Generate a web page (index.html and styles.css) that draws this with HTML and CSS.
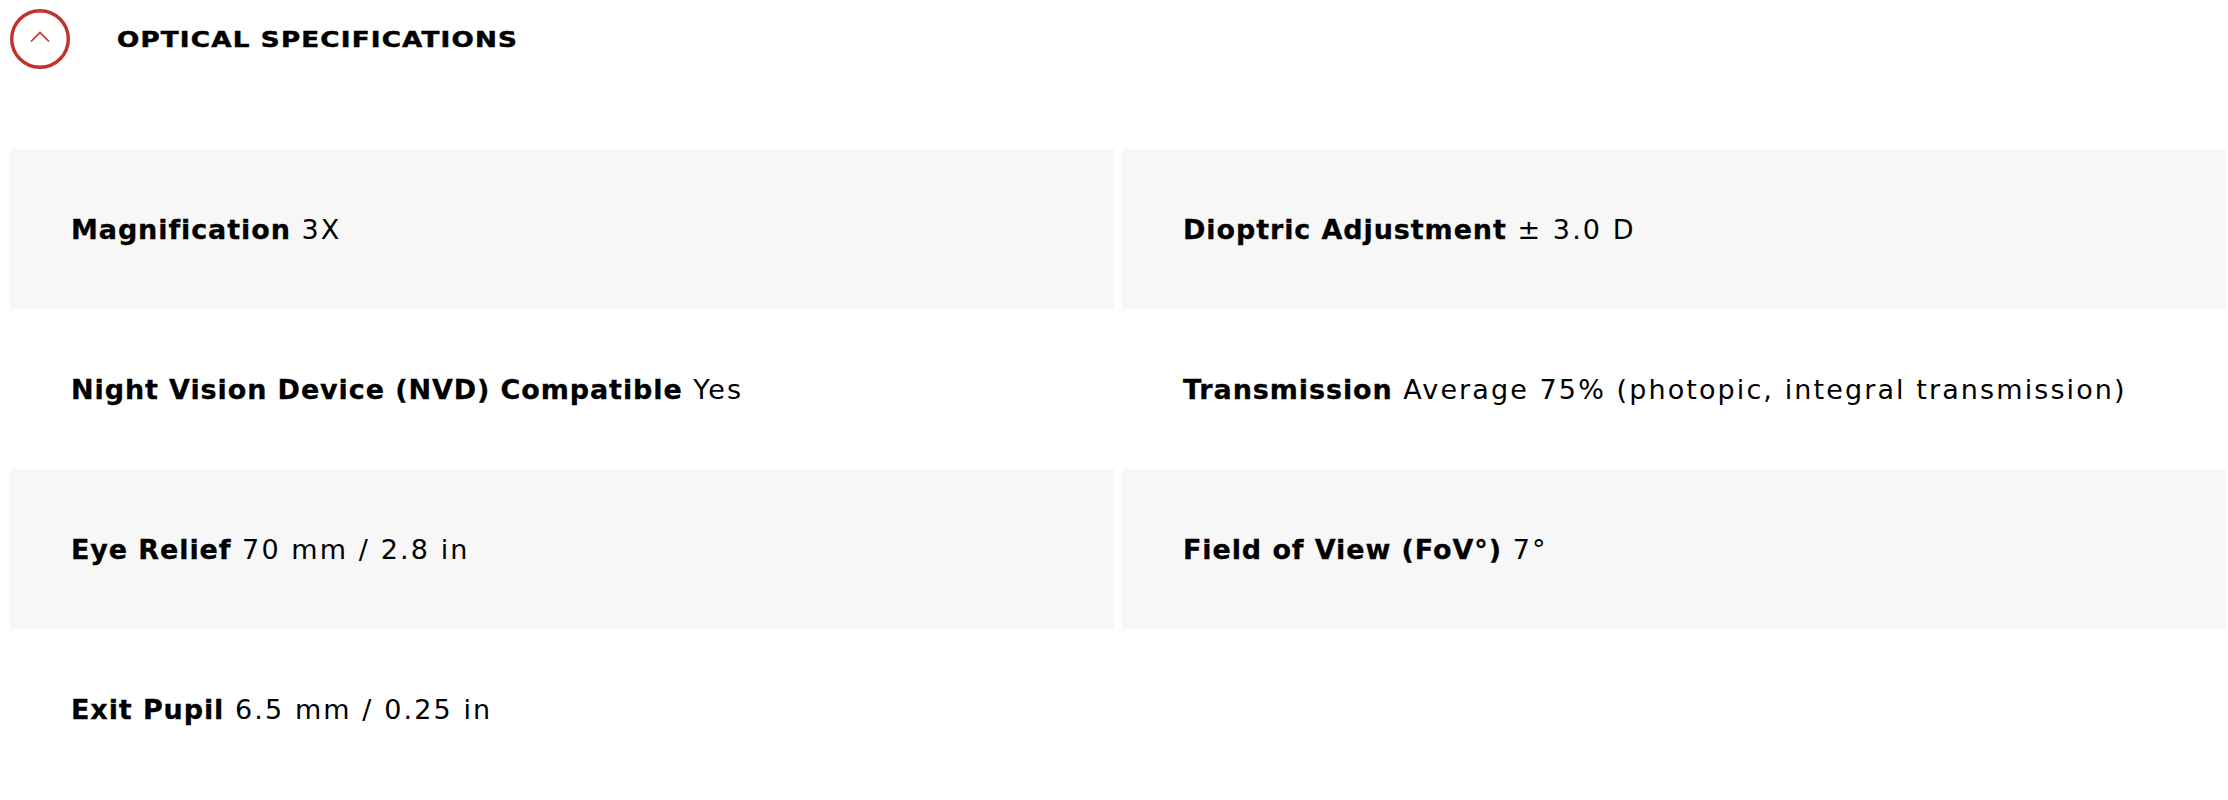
FILE: index.html
```html
<!DOCTYPE html>
<html lang="en">
<head>
<meta charset="utf-8">
<title>Optical Specifications</title>
<link rel="stylesheet" href="styles.css">
</head>
<body>
<section class="specs">
  <header class="specs-header">
    <button class="toggle" aria-label="Collapse">
      <svg viewBox="0 0 60 60" width="60" height="60">
        <circle cx="30" cy="30" r="28.3" fill="none" stroke="#c3312b" stroke-width="3.4"/>
        <path d="M21 32.5 L30 23.5 L39 32.5" fill="none" stroke="#c3312b" stroke-width="1.7"/>
      </svg>
    </button>
    <h2 class="specs-title">OPTICAL SPECIFICATIONS</h2>
  </header>
  <div class="specs-grid">
    <div class="cell shaded"><p><b>Magnification</b> 3X</p></div>
    <div class="cell shaded"><p><b>Dioptric Adjustment</b> ± 3.0 D</p></div>
    <div class="cell"><p><b>Night Vision Device (NVD) Compatible</b> Yes</p></div>
    <div class="cell"><p><b>Transmission</b> Average 75% (photopic, integral transmission)</p></div>
    <div class="cell shaded"><p><b>Eye Relief</b> 70 mm / 2.8 in</p></div>
    <div class="cell shaded"><p><b>Field of View (FoV°)</b> 7°</p></div>
    <div class="cell"><p><b>Exit Pupil</b> 6.5 mm / 0.25 in</p></div>
    <div class="cell"></div>
  </div>
</section>
</body>
</html>
```

FILE: styles.css
```css
html, body {
  margin: 0;
  padding: 0;
  background: #ffffff;
}
body {
  font-family: "DejaVu Sans", "Liberation Sans", sans-serif;
  color: #000000;
}
.specs {
  padding: 9px 2px 0 10px;
}
.specs-header {
  display: flex;
  align-items: center;
  gap: 47px;
  height: 60px;
}
.toggle {
  display: block;
  width: 60px;
  height: 60px;
  padding: 0;
  border: 0;
  background: none;
  cursor: pointer;
}
.toggle svg {
  display: block;
}
.specs-title {
  margin: 0;
  font-size: 22px;
  font-weight: 700;
  letter-spacing: 1px;
  line-height: 1;
  padding-top: 2px;
  -webkit-text-stroke: 0.5px #000;
  transform: scaleX(1.19);
  transform-origin: left center;
}
.specs-grid {
  margin-top: 80px;
  display: grid;
  grid-template-columns: 1fr 1fr;
  column-gap: 8px;
  grid-auto-rows: 160px;
}
.cell {
  display: flex;
  align-items: center;
  padding-left: 61px;
}
.cell.shaded {
  background: #f7f7f7;
}
.cell p {
  margin: 0;
  font-size: 27px;
  line-height: 1;
  letter-spacing: 2.1px;
}
.cell b {
  font-weight: 700;
  letter-spacing: 0.9px;
  -webkit-text-stroke: 0.3px #000;
}
```
